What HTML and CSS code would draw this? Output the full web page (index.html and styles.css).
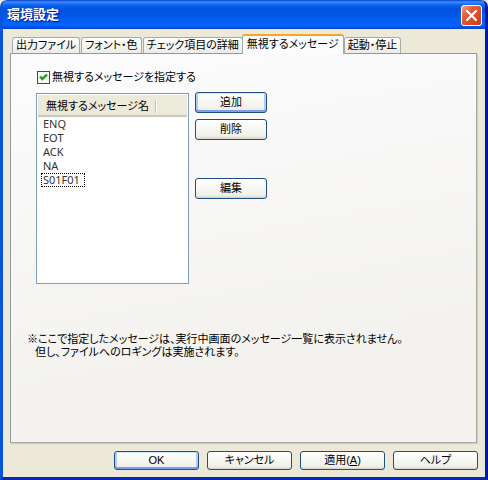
FILE: index.html
```html
<!DOCTYPE html>
<html lang="ja">
<head>
    <meta charset="UTF-8">
    <meta name="viewport" content="width=device-width, initial-scale=1.0">
    <title>環境設定</title>
    <link rel="stylesheet" href="styles.css">
</head>
<body>
    <form class="dialog">
        <header class="titlebar">
            <h1>環境設定</h1>
            <button type="button" class="close" aria-label="閉じる">
                <svg width="13" height="13" viewBox="0 0 13 13"><path d="M2 2L11 11M11 2L2 11" stroke="#fff" stroke-width="2.2" stroke-linecap="round"/></svg>
            </button>
        </header>

        <div class="content">
            <div class="tabs" role="tablist">
                <button type="button" class="tab" role="tab">出力ファイル</button>
                <button type="button" class="tab" role="tab">フォント・色</button>
                <button type="button" class="tab" role="tab">チェック項目の詳細</button>
                <button type="button" class="tab active" role="tab" aria-selected="true">無視するメッセージ</button>
                <button type="button" class="tab" role="tab">起動・停止</button>
            </div>

            <div class="panel" role="tabpanel">
                <label class="check">
                    <input type="checkbox" checked>
                    無視するメッセージを指定する
                </label>

                <div class="ignore">
                    <div class="list">
                        <table>
                            <thead>
                                <tr><th><span class="column">無視するメッセージ名</span></th></tr>
                            </thead>
                            <tbody>
                                <tr><td><span>ENQ</span></td></tr>
                                <tr><td><span>EOT</span></td></tr>
                                <tr><td><span>ACK</span></td></tr>
                                <tr><td><span>NA</span></td></tr>
                                <tr><td><span class="focused">S01F01</span></td></tr>
                            </tbody>
                        </table>
                    </div>
                    <div class="actions">
                        <button type="button" class="btn default">追加</button>
                        <button type="button" class="btn">削除</button>
                        <button type="button" class="btn edit">編集</button>
                    </div>
                </div>

                <p class="note">※ここで指定したメッセージは、実行中画面のメッセージ一覧に表示されません。<br><span class="indent">但し、ファイルへのロギングは実施されます。</span></p>
            </div>

            <footer class="buttons">
                <button type="submit" class="btn default">OK</button>
                <button type="button" class="btn">キャンセル</button>
                <button type="button" class="btn">適用(<u>A</u>)</button>
                <button type="button" class="btn">ヘルプ</button>
            </footer>
        </div>
    </form>
</body>
</html>
```

FILE: styles.css
```css
* {
    box-sizing: border-box;
}
body {
    margin: 0;
    background: #ece9d8;
    font-family: "Liberation Sans", "Noto Sans CJK JP", sans-serif;
    font-size: 11px;
    line-height: 13px;
    font-feature-settings: "palt";
    color: #000;
}
button {
    font: inherit;
    font-feature-settings: inherit;
    color: inherit;
    padding: 0;
    white-space: nowrap;
}
.dialog {
    display: flex;
    flex-direction: column;
    min-height: 100vh;
    border: solid;
    border-width: 0 3px 3px;
    border-color: #0855dd #0019a8 #0428b8 #0855dd;
    border-radius: 7px 7px 0 0;
    overflow: hidden;
}

/* title bar */
.titlebar {
    display: flex;
    align-items: center;
    justify-content: space-between;
    height: 29px;
    padding: 1px 3px 0 4px;
    background: linear-gradient(#0a3fcb 0, #3a90ff 2px, #0a62ee 5px, #0052e0 9px, #0058e8 16px, #0066ff 25px, #0040cf 29px);
}
.titlebar h1 {
    margin: 0;
    font-size: 13px;
    line-height: 18px;
    color: #fff;
    text-shadow: 1px 1px 1px #0f1089;
}
.close {
    display: flex;
    align-items: center;
    justify-content: center;
    width: 21px;
    height: 21px;
    border: 1px solid #fff;
    border-radius: 3px;
    background: linear-gradient(135deg, #f0a08a, #e25a3a 35%, #d03a10);
}

/* tabs */
.content {
    display: flex;
    flex-direction: column;
    flex: 1;
    padding: 5px 8px 7px 7px;
}
.tabs {
    display: flex;
    align-items: flex-end;
    padding-left: 2px;
    height: 19px;
}
.tab {
    height: 16px;
    padding: 0 3px;
    margin-right: 1px;
    border: 1px solid #a3abac;
    border-bottom: 0;
    border-radius: 3px 3px 0 0;
    background: linear-gradient(#fff, #ecebe6);
}
.tab.active {
    position: relative;
    height: 20px;
    margin: 0 0 -1px -2px;
    padding: 0 4px 2px;
    border-top: 2px solid #f5a623;
    background: #fcfcfe;
}
.panel {
    flex: 1;
    padding: 17px 16px;
    border: 1px solid #919b9c;
    border-color: #919b9c #a5a9a5 #a5a9a5 #919b9c;
    box-shadow: 1px 1px 1px #d0cebf;
    background: linear-gradient(170deg, #fcfcfe, #f3f2ee 75%);
}

/* list of ignored messages */
.check {
    display: flex;
    align-items: center;
    gap: 2px;
    margin-left: 10px;
}
.check input {
    appearance: none;
    width: 13px;
    height: 13px;
    margin: 0;
    border: 1px solid #1c5180;
    background: linear-gradient(135deg, #dcdcd7, #fff);
}
.check input:checked {
    background: #f8f8f6 url("data:image/svg+xml,%3Csvg xmlns='http://www.w3.org/2000/svg' viewBox='0 0 11 11'%3E%3Cpath d='M2 4.5L4.3 7L9 2.6' fill='none' stroke='%2321a121' stroke-width='2.4'/%3E%3C/svg%3E");
}
.ignore {
    display: flex;
    gap: 6px;
    margin: 9px 0 49px 9px;
}
.list {
    width: 153px;
    height: 191px;
    padding: 1px;
    border: 1px solid #7f9db9;
    background: #fff;
}
.list table {
    width: 100%;
    border-collapse: collapse;
}
.list th {
    height: 22px;
    padding: 0 0 0 8px;
    text-align: left;
    font-weight: normal;
    background: #ebeadb;
    box-shadow: inset 0 -2px 1px #cbc7b8;
}
.column {
    display: inline-block;
    width: 110px;
    border-right: 1px solid #c7c5b2;
    box-shadow: 1px 0 #fff;
    white-space: nowrap;
}
.list td {
    height: 14px;
    padding: 0 4px;
    font-family: "Noto Sans", sans-serif;
    line-height: 12px;
    color: #333;
}
.list td span {
    display: inline-block;
    padding: 0 1px;
}
.list .focused {
    padding-right: 4px;
    outline: 1px dotted #000;
}

/* push buttons */
.btn {
    height: 21px;
    border: 1px solid #1f4f80;
    border-radius: 3px;
    background: linear-gradient(#fff, #f0f0ea 85%, #d8d2c5);
}
.btn.default {
    box-shadow: inset 0 1px #cee7ff, inset 0 -2px #7f9cee, inset 2px 0 #b4ccf5, inset -2px 0 #b4ccf5;
}
.actions {
    display: flex;
    flex-direction: column;
    gap: 6px;
    width: 72px;
    margin-top: -1px;
}
.actions .edit {
    margin-top: 32px;
}
.note {
    margin: 0;
}
.indent {
    padding-left: 8px;
}
.buttons {
    display: grid;
    grid-template-columns: repeat(4, 85px);
    gap: 8px;
    justify-content: end;
    padding-top: 8px;
    margin-right: -1px;
}
.buttons .btn {
    height: 19px;
}
```
